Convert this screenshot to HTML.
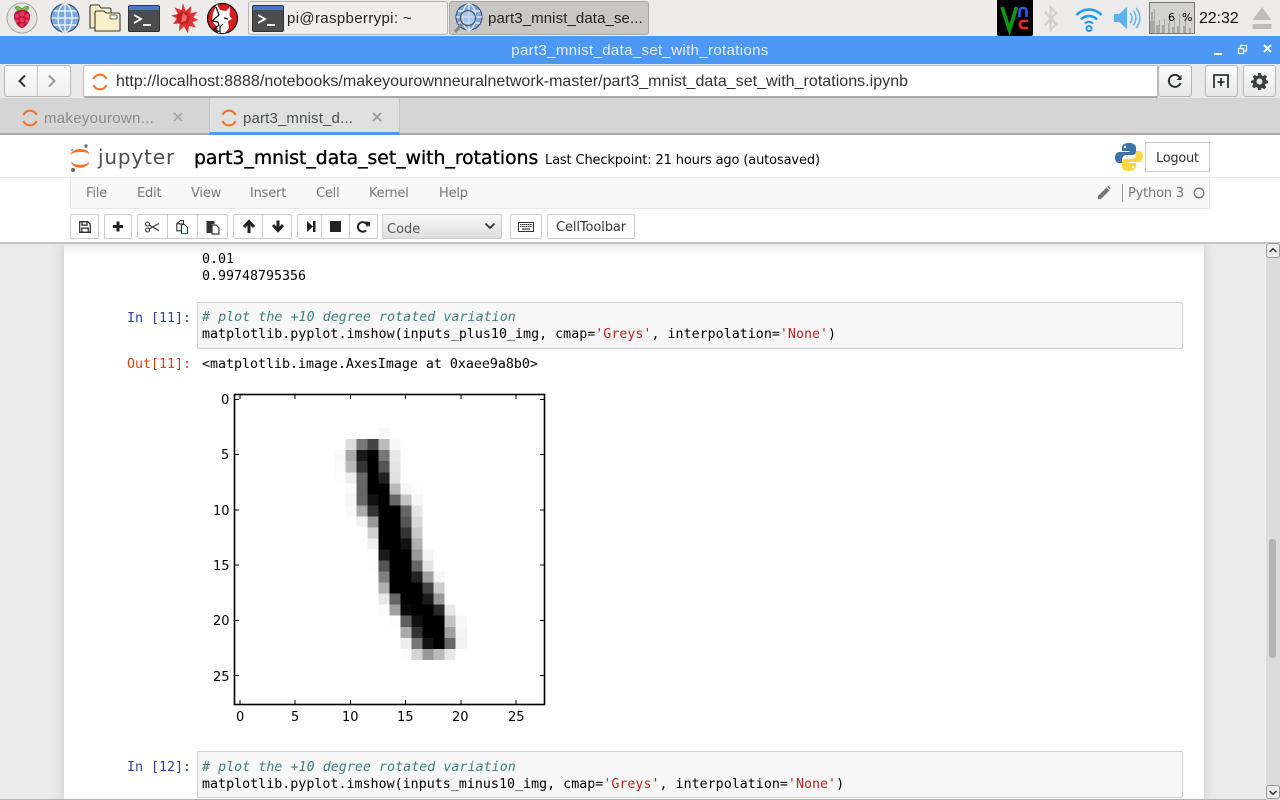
<!DOCTYPE html>
<html><head><meta charset="utf-8"><title>part3_mnist_data_set_with_rotations</title>
<style>
html,body{margin:0;padding:0;width:1280px;height:800px;overflow:hidden;background:#eee}
*{box-sizing:border-box}
.a{position:absolute}
.t{position:absolute;white-space:nowrap;line-height:20px;height:20px}
.u{font-family:"Liberation Sans",sans-serif;color:#2e3436}
.d{font-family:"DejaVu Sans",sans-serif}
.m{font-family:"DejaVu Sans Mono",monospace;font-size:13.29px;color:#000}
.c{letter-spacing:.03px}
.b{position:absolute;background:#fff;border:1px solid #ccc;border-radius:2px;height:25px;top:214px}
.g{position:absolute;top:214px;height:25px;width:1px;background:#ccc}
.mn{font-family:"DejaVu Sans",sans-serif;font-size:13px;color:#777;top:184px;letter-spacing:-.2px}
.ub{position:absolute;background:linear-gradient(#fafafa,#e9e9e9);border:1px solid #b5b5b5;border-radius:3px}
.tk{font-family:"DejaVu Sans",sans-serif;font-size:13px;color:#000}
svg{position:absolute;overflow:visible}
i{font-style:italic}
</style></head><body>

<!-- panel -->
<div class="a" style="left:0;top:0;width:1280px;height:36px;background:#edecea"></div>
<svg style="left:0;top:0" width="250" height="36" viewBox="0 0 250 36">
 <circle cx="22" cy="18" r="15" fill="#e4e4e2" stroke="#a5a5a3"/>
 <path d="M22 9c-2-3-6-3-7-2 0 2 2 4 5 4zM22 9c2-3 6-3 7-2 0 2-2 4-5 4z" fill="#6cc04a" stroke="#3a7f22" stroke-width=".5"/>
 <path d="M22 10c5 0 8 2 8 6s-1 5-2 7-4 5-6 5-5-3-6-5-2-3-2-7 3-6 8-6z" fill="#c0143c"/>
 <g fill="#e63a5e"><circle cx="22" cy="14" r="2.4"/><circle cx="17" cy="16" r="2"/><circle cx="27" cy="16" r="2"/><circle cx="22" cy="20" r="2.4"/><circle cx="17" cy="21" r="1.8"/><circle cx="27" cy="21" r="1.8"/><circle cx="22" cy="25" r="1.8"/></g>
 <circle cx="65" cy="18" r="14" fill="#7ba8e0" stroke="#3f4f66" stroke-width="1.2"/>
 <path d="M51.500 18h27M53.500 11h23M53.500 25h23M65 4v28" stroke="#e8f0fb" stroke-width="1.400" fill="none"/>
 <ellipse cx="65" cy="18" rx="7" ry="14" stroke="#e8f0fb" stroke-width="1.400" fill="none"/>
 <path d="M90 7q0-2 2-2h7l2 3h8q2 0 2 2v18h-21z" fill="#f3ecc8" stroke="#3c3a30" stroke-width="1.100"/>
 <path d="M95 13q0-2 2-2h7l2 2h12q2 0 2 2v16h-25z" fill="#f8f0ca" stroke="#3c3a30" stroke-width="1.100"/>
 <rect x="110" y="15" width="7" height="4" rx="1" fill="#fff" stroke="#3c3a30" stroke-width=".8"/>
 <rect x="128.500" y="5.500" width="31" height="26" rx="1.500" fill="#4d4d4d" stroke="#333"/>
 <rect x="129" y="6" width="30" height="4" fill="#4a78c8"/>
 <path d="M134 15l7 4-7 4" stroke="#fff" stroke-width="1.800" fill="none"/><path d="M143 25h8" stroke="#fff" stroke-width="1.800"/>
 <path d="M183 3l2.500 8 6-5-1 7 7-1-4.500 5.500 5.500 2.500-6 2 3.500 5.500-7-1.500-1 7.500-4-7-5 4.500 .5-7.500-6.500 .5 4-5.500-6-3 7-1.500-3.500-6.500 7 2.500z" fill="#e03434"/>
 <circle cx="183" cy="18" r="6.500" fill="#c42020"/><path d="M183 13l4 3-1 5-5 1z" fill="#ee6a6a"/>
 <circle cx="222.500" cy="18.500" r="15" fill="#d81e1e" stroke="#111" stroke-width="1.200"/>
 <path d="M217 4l3 6 6 1 4-4-.5 9 2.500 3-4 2 1 7-4 5h-7l-1-6-5-6 1-8z" fill="#fff"/>
 <path d="M216 7l3 8-7 6 6 1 1 3-5 4 6 3v-5l3-3M224 18l4 1" stroke="#111" stroke-width="1.200" fill="none"/>
</svg>

<div class="a" style="left:248px;top:1px;width:200px;height:34px;background:#efeeec;border:1px solid #b4b3b0;border-radius:3px"></div>
<svg style="left:252px;top:5px" width="32" height="28" viewBox="0 0 32 28">
 <rect x=".5" y=".5" width="31" height="26" rx="1.500" fill="#4d4d4d" stroke="#333"/><rect x="1" y="1" width="30" height="4" fill="#4a78c8"/>
 <path d="M6 10l7 4-7 4" stroke="#fff" stroke-width="1.800" fill="none"/><path d="M15 20h8" stroke="#fff" stroke-width="1.800"/>
</svg>
<div class="t u" style="left:287px;top:9px;font-size:15px;color:#222;letter-spacing:.35px">pi@raspberrypi: ~</div>

<div class="a" style="left:449px;top:1px;width:200px;height:34px;background:#c9c7c4;border:1px solid #a9a8a5;border-radius:3px"></div>
<svg style="left:452px;top:3px" width="32" height="32" viewBox="0 0 32 32">
 <circle cx="17" cy="14" r="13" fill="#7ba8e0" stroke="#3f4f66" stroke-width="1.100"/>
 <path d="M4 14h26M6 8h22M6 20h22M17 1v26" stroke="#e8f0fb" stroke-width="1.300" fill="none"/>
 <ellipse cx="17" cy="14" rx="6.500" ry="13" stroke="#e8f0fb" stroke-width="1.300" fill="none"/>
 <circle cx="16" cy="15" r="7.500" fill="#bcd3ee" fill-opacity=".7" stroke="#555" stroke-width="1.300"/>
 <path d="M10 21l-7 8" stroke="#8a8a8a" stroke-width="3"/>
</svg>
<div class="t u" style="left:488px;top:9px;font-size:15px;color:#222;letter-spacing:.1px">part3_mnist_data_se...</div>

<div class="a" style="left:997px;top:0;width:36px;height:36px;background:#000;border-radius:0 0 2px 2px"></div>
<svg style="left:997px;top:0" width="36" height="36" viewBox="0 0 36 36" fill="none">
 <path d="M5 7l7.500 23 7-23" stroke="#0c9a16" stroke-width="3.600"/>
 <path d="M22.500 17v-6q0-3 3.500-3t3.500 3v6" stroke="#2b5cf0" stroke-width="2.600"/>
 <path d="M31 21h-5q-3 0-3 3.500t3 3.500h5" stroke="#ea2b2b" stroke-width="2.600"/>
</svg>
<svg style="left:1043px;top:5px" width="16" height="27" viewBox="0 0 16 27" fill="none">
 <path d="M2 7l11 12-5.500 6V2L13 8 2 20" stroke="#d0d0ce" stroke-width="2.200"/>
</svg>
<svg style="left:1075px;top:5px" width="28" height="27" viewBox="0 0 28 27" fill="none" stroke="#1c9cf0">
 <path d="M1.500 10a17 17 0 0 1 25 0" stroke-width="2.500"/>
 <path d="M6 14.500a11 11 0 0 1 16 0" stroke-width="2.500"/>
 <path d="M10 18.500a5.500 5.500 0 0 1 8 0" stroke-width="2"/>
 <circle cx="14" cy="23.500" r="2.500" stroke-width="2"/>
</svg>
<svg style="left:1113px;top:6px" width="28" height="24" viewBox="0 0 28 24" fill="none">
 <path d="M1 8h5l8-7v22l-8-7H1z" fill="#5ab2f5"/>
 <path d="M17 7a7 7 0 0 1 0 10M20 4.500a11 11 0 0 1 0 15M23 2a15 15 0 0 1 0 20" stroke="#5ab2f5" stroke-width="1.500"/>
</svg>
<div class="a" style="left:1149px;top:2px;width:46px;height:32px;background:#d2d2d0;border:1px solid #777"></div>
<svg style="left:1150px;top:3px" width="44" height="30" viewBox="0 0 44 30" fill="#a8a8a6">
 <path d="M0 30V18h1v-9h2v9h1v-12h1v24h1v-8h3v-5h1v13h2v-8h2v-6h1v14h3v-10h1v-8h1v18h2v-6h2v-9h1v15h2v-7h2v-12h1v19h3v-7h2v-15h1v22h3v-5h2v5z"/>
</svg>
<div class="t d" style="left:1168px;top:8px;font-size:11px;color:#000">6</div>
<div class="t d" style="left:1182px;top:8px;font-size:11px;color:#000">%</div>
<div class="t u" style="left:1199px;top:9px;font-size:16px;color:#111;letter-spacing:-.1px">22:32</div>
<svg style="left:1252px;top:7px" width="20" height="24" viewBox="0 0 20 24" fill="#bdbdbb">
 <path d="M10 0l9.500 13H.5z"/><rect x=".5" y="17" width="19" height="5"/>
</svg>

<!-- title bar -->
<div class="a" style="left:0;top:36px;width:1280px;height:28px;background:#4d98f5"></div>
<div class="t u" style="left:0;top:41px;width:1280px;text-align:center;font-size:15px;color:#e4effd;letter-spacing:.35px">part3_mnist_data_set_with_rotations</div>
<svg style="left:1210px;top:40px" width="70" height="22" viewBox="0 0 70 22" fill="none" stroke="#f4f8ff">
 <path d="M4 14h8" stroke-width="2"/>
 <rect x="28.500" y="8.500" width="5" height="5" stroke-width="1.200"/><path d="M30.500 8V5.500h6v5.500H34" stroke-width="1.200"/>
 <path d="M54 5l7 7M61 5l-7 7" stroke-width="2"/>
</svg>

<!-- browser toolbar -->
<div class="a" style="left:0;top:64px;width:1280px;height:34px;background:#e9e9e9"></div>
<div class="ub" style="left:4px;top:65px;width:67px;height:32px;background:linear-gradient(#fbfbfb,#f0f0f0)"></div>
<div class="a" style="left:37px;top:66px;width:1px;height:30px;background:#c5c5c5"></div>
<svg style="left:15px;top:72px" width="46" height="18" viewBox="0 0 46 18" fill="none" stroke-width="2">
 <path d="M10 3.500L4.500 9l5.500 5.500" stroke="#2e3436"/><path d="M34 3.500L39.500 9 34 14.500" stroke="#9a9a9a"/>
</svg>
<div class="a" style="left:83px;top:65px;width:1075px;height:33px;background:#fff;border:1px solid #bdbdbd;border-bottom:2px solid #aaa;border-radius:3px 0 0 3px"></div>
<svg style="left:92px;top:73px" width="16" height="18" viewBox="0 0 16 18" fill="none" stroke="#f37626" stroke-width="2.200">
 <path d="M1.500 6a7 7 0 0 1 13 0"/><path d="M1.500 12a7 7 0 0 0 13 0"/>
</svg>
<div class="t u" style="left:116px;top:72px;font-size:16px;color:#333;letter-spacing:.03px">http://localhost:8888/notebooks/makeyourownneuralnetwork-master/part3_mnist_data_set_with_rotations.ipynb</div>
<div class="ub" style="left:1158px;top:65px;width:34px;height:32px"></div>
<svg style="left:1166px;top:72px" width="18" height="18" viewBox="0 0 18 18" fill="none" stroke="#2e3436" stroke-width="2">
 <path d="M14.500 11a6 6 0 1 1-1-6l1.500 2"/><path d="M15.500 3v5h-5" fill="#2e3436" stroke="none"/>
</svg>
<div class="ub" style="left:1205px;top:65px;width:33px;height:32px"></div>
<svg style="left:1212px;top:73px" width="18" height="18" viewBox="0 0 18 18" fill="none" stroke="#2e3436" stroke-width="1.800">
 <path d="M2 15V2h14v13M9 5v8M5.500 9h7"/>
</svg>
<div class="ub" style="left:1243px;top:65px;width:33px;height:32px"></div>
<svg style="left:1251px;top:73px" width="17" height="17" viewBox="0 0 17 17">
 <path d="M7 0h3l.4 2.300 1.600.7 2-1.300 2 2-1.300 2 .7 1.600L17 7.700v2.600l-2.300.4-.7 1.600 1.300 2-2 2-2-1.300-1.600.7L10 17H7l-.4-2.300-1.600-.7-2 1.300-2-2 1.300-2-.7-1.600L0 10.300V7.700l2.300-.4.7-1.600-1.300-2 2-2 2 1.300 1.600-.7z" fill="#3a3f41"/><circle cx="8.500" cy="8.500" r="3" fill="#e9e9e9"/>
</svg>

<!-- tabs -->
<div class="a" style="left:0;top:98px;width:1280px;height:37px;background:#d5d5d5;border-bottom:2px solid #a9a9a9"></div>
<div class="a" style="left:209px;top:98px;width:191px;height:37px;background:#e0e0e0;border-left:1px solid #c4c4c4;border-right:1px solid #c4c4c4;border-bottom:3px solid #4d98f5"></div>
<svg style="left:22px;top:109px" width="16" height="18" viewBox="0 0 16 18" fill="none" stroke="#f37626" stroke-width="2.200"><path d="M1.500 6a7 7 0 0 1 13 0"/><path d="M1.500 12a7 7 0 0 0 13 0"/></svg>
<div class="t u" style="left:44px;top:109px;font-size:15px;color:#8c8c8c;letter-spacing:.3px">makeyourown...</div>
<svg style="left:172px;top:111px" width="12" height="12" viewBox="0 0 12 12" stroke="#a5a5a5" stroke-width="1.800"><path d="M2 2l8 8M10 2l-8 8"/></svg>
<svg style="left:221px;top:109px" width="16" height="18" viewBox="0 0 16 18" fill="none" stroke="#f37626" stroke-width="2.200"><path d="M1.500 6a7 7 0 0 1 13 0"/><path d="M1.500 12a7 7 0 0 0 13 0"/></svg>
<div class="t u" style="left:243px;top:109px;font-size:15px;color:#4a4f51;letter-spacing:.15px">part3_mnist_d...</div>
<svg style="left:371px;top:111px" width="12" height="12" viewBox="0 0 12 12" stroke="#999" stroke-width="1.800"><path d="M2 2l8 8M10 2l-8 8"/></svg>

<!-- page bg -->
<div class="a" style="left:0;top:243px;width:1265px;height:557px;background:#ececec"></div>
<div class="a" style="left:64px;top:243px;width:1140px;height:557px;background:#fff;box-shadow:0 0 12px 1px rgba(87,87,87,.2)"></div>
<div class="a" style="left:64px;top:244px;width:1140px;height:12px;background:linear-gradient(#ececec,#fff)"></div>

<!-- jupyter header -->
<div class="a" style="left:0;top:135px;width:1280px;height:109px;background:#fff;border-bottom:2px solid #c4c4c4"></div>
<svg style="left:70px;top:143px" width="21" height="30" viewBox="0 0 21 30">
 <path d="M1.500 10.500C4 5 16 5 19 10.500 16 8 5 8 1.500 10.500z" fill="#f37626" stroke="#f37626" stroke-width=".8"/>
 <path d="M1.500 19.500C4 26 16 26 19 19.500 16 23 5 23 1.500 19.500z" fill="#f37626" stroke="#f37626" stroke-width=".8"/>
 <circle cx="16" cy="3" r="1.700" fill="#767677"/><circle cx="2" cy="7" r="1" fill="#989798"/><circle cx="3" cy="27" r="2" fill="#616262"/>
</svg>
<div class="t d" style="left:98px;top:147px;font-size:20px;color:#4e4e4e;letter-spacing:.85px">jupyter</div>
<div class="t d" style="left:194px;top:149px;font-size:18.800px;color:#000;-webkit-text-stroke:.35px #000">part3_mnist_data_set_with_rotations</div>
<div class="t d" style="left:545px;top:151px;font-size:13px;color:#000;letter-spacing:-.14px">Last Checkpoint: 21 hours ago (autosaved)</div>
<svg style="left:1115px;top:143px" width="28" height="28" viewBox="0 0 28 28">
 <path d="M14 0c-5 0-7 2-7 4.500V8h7.500v1H4.500C2 9 0 11 0 14.500S1.500 20 4 20h3v-3.500C7 14 9 12 11.500 12h6c2 0 3.500-1.500 3.500-3.500v-4C21 2 18.500 0 14 0z" fill="#3a74a8"/>
 <path d="M14 28c5 0 7-2 7-4.500V20h-7.500v-1h10C26 19 28 17 28 13.500S26.500 8 24 8h-3v3.500c0 2.500-2 4.500-4.500 4.500h-6C8.500 16 7 17.500 7 19.500v4C7 26 9.500 28 14 28z" fill="#ffd545"/>
 <circle cx="10" cy="4" r="1.200" fill="#fff"/><circle cx="18" cy="24" r="1.200" fill="#fff"/>
</svg>
<div class="a" style="left:1145px;top:142px;width:65px;height:30px;background:#fff;border:1px solid #ccc"></div>
<div class="t d" style="left:1156px;top:149px;font-size:13px;color:#333;letter-spacing:-.3px">Logout</div>
<div class="a" style="left:0;top:177px;width:1280px;height:1px;background:#e7e7e7"></div>
<div class="a" style="left:70px;top:178px;width:1140px;height:31px;background:#f8f8f8;border:1px solid #e7e7e7;border-top:0;border-radius:0 0 2px 2px"></div>
<div class="t mn" style="left:86px">File</div>
<div class="t mn" style="left:137px">Edit</div>
<div class="t mn" style="left:191px">View</div>
<div class="t mn" style="left:250px">Insert</div>
<div class="t mn" style="left:316px">Cell</div>
<div class="t mn" style="left:369px">Kernel</div>
<div class="t mn" style="left:439px">Help</div>
<svg style="left:1097px;top:186px" width="14" height="14" viewBox="0 0 14 14" fill="#777"><path d="M1 10L9.500 1.500l3 3L4 13H1zM10.500.5l1-.5 2 2-.5 1.500z"/></svg>
<div class="a" style="left:1122px;top:184px;width:1px;height:18px;background:#999"></div>
<div class="t mn" style="left:1128px">Python 3</div>
<svg style="left:1193px;top:187px" width="12" height="12" viewBox="0 0 12 12" fill="none" stroke="#777" stroke-width="1.300"><circle cx="6" cy="6" r="4.800"/></svg>

<!-- jupyter toolbar -->
<div class="b" style="left:70px;width:29px"></div>
<div class="b" style="left:104px;width:28px"></div>
<div class="b" style="left:137px;width:91px"></div><div class="g" style="left:167px"></div><div class="g" style="left:197px"></div>
<div class="b" style="left:233px;width:59px"></div><div class="g" style="left:262px"></div>
<div class="b" style="left:297px;width:81px"></div><div class="g" style="left:321px"></div><div class="g" style="left:349px"></div>
<div class="b" style="left:382px;width:120px;background:linear-gradient(#f8f8f8,#dedede);border-radius:2px"></div>
<div class="t d" style="left:387px;top:220px;font-size:13px;color:#555">Code</div>
<svg style="left:484px;top:222px" width="12" height="8" viewBox="0 0 12 8" fill="none" stroke="#333" stroke-width="1.800"><path d="M1.500 1.500L6 6l4.500-4.500"/></svg>
<div class="b" style="left:510px;width:32px"></div>
<div class="b" style="left:547px;width:88px"></div>
<div class="t d" style="left:556px;top:218px;font-size:13px;color:#333;letter-spacing:-.1px">CellToolbar</div>
<svg style="left:70px;top:214px" width="570" height="25" viewBox="0 0 570 25">
 <g transform="translate(9,7)" fill="none" stroke="#333" stroke-width="1.300"><path d="M.7 .7h8l2.600 2.600v8H.7z"/><path d="M3 .7v3.500h5V.7M2.800 11V7.200h6.400V11"/></g>
 <path d="M48 7.500v10M43 12.500h10" stroke="#222" stroke-width="3" fill="none"/>
 <g transform="translate(75,7)" fill="none" stroke="#333" stroke-width="1.100"><circle cx="2.500" cy="3" r="2"/><circle cx="2.500" cy="9" r="2"/><path d="M4 4l10 5.500M4 8l10-5.500"/></g>
 <g transform="translate(106,6)" stroke="#333" stroke-width="1.100"><path d="M4.500 .6h3v3.400H1V3.500L4.500 .6z" fill="#fff"/><path d="M.8 3.800h4.500v7H.8z" fill="#fff"/><path d="M5.500 4.500h3l3 3v6H5.500z" fill="#fff"/><path d="M5.500 13.500h6" stroke="#2b5cb8"/></g>
 <g transform="translate(136,6)"><path d="M.5 1h8v3h-3v9h-5z" fill="#333"/><path d="M6 5h4l3 3v6H6z" fill="#fff" stroke="#333" stroke-width="1.200"/></g>
 <path d="M179 19v-10M174 13l5-5.500 5 5.500" stroke="#222" stroke-width="3" fill="none"/>
 <path d="M208 6.500v10M203 11l5 5.500 5-5.500" stroke="#222" stroke-width="3" fill="none"/>
 <path d="M237 7l6 5.500-6 5.500z M243 7h2.500v11H243z" fill="#222"/>
 <rect x="260" y="7" width="11" height="11" fill="#222"/>
 <path d="M298 12.500a4.800 4.800 0 1 0-1.400 3.800" stroke="#222" stroke-width="2" fill="none" transform="translate(-.5,0)"/><path d="M295 7.500l5 .500v5z" fill="#222"/>
 <g transform="translate(448,8)"><rect x=".5" y=".5" width="15" height="9" fill="#fff" stroke="#333"/><path d="M2 2.500h12M2 4.500h12" stroke="#333" stroke-dasharray="1.500 .5"/><path d="M4 7h8" stroke="#333" stroke-width="1.200"/></g>
</svg>

<!-- notebook -->
<div class="t m" style="left:202px;top:250px">0.01</div>
<div class="t m" style="left:202px;top:267px">0.99748795356</div>

<div class="t m" style="left:127px;top:309px;color:#303f9f">In [11]:</div>
<div class="a" style="left:197px;top:302px;width:986px;height:47px;background:#f7f7f7;border:1px solid #cfcfcf;border-radius:2px"></div>
<div class="t m" style="left:202px;top:308px;color:#408080;letter-spacing:.05px"><i># plot the +10 degree rotated variation</i></div>
<div class="t m c" style="left:202px;top:325px">matplotlib.pyplot.imshow(inputs_plus10_img, cmap=<span style="color:#ba2121">'Greys'</span>, interpolation=<span style="color:#ba2121">'None'</span>)</div>
<div class="t m" style="left:127px;top:355px;color:#d84315">Out[11]:</div>
<div class="t m" style="left:202px;top:355px">&lt;matplotlib.image.AxesImage at 0xaee9a8b0&gt;</div>

<!-- digit -->
<svg style="left:235px;top:395px" width="309" height="309" viewBox="0 0 28 28" shape-rendering="crispEdges">
<rect x="13" y="3" width="1" height="1" fill="#fbfbfb"/>
<rect x="10" y="4" width="1" height="1" fill="#ddd"/><rect x="11" y="4" width="1" height="1" fill="#777"/><rect x="12" y="4" width="1" height="1" fill="#444"/><rect x="13" y="4" width="1" height="1" fill="#bbb"/><rect x="14" y="4" width="1" height="1" fill="#f8f8f8"/>
<rect x="9" y="5" width="1" height="1" fill="#fafafa"/><rect x="10" y="5" width="1" height="1" fill="#aaa"/><rect x="11" y="5" width="1" height="1" fill="#1a1a1a"/><rect x="12" y="5" width="1" height="1" fill="#000"/><rect x="13" y="5" width="1" height="1" fill="#777"/><rect x="14" y="5" width="1" height="1" fill="#e8e8e8"/>
<rect x="9" y="6" width="1" height="1" fill="#fbfbfb"/><rect x="10" y="6" width="1" height="1" fill="#bbb"/><rect x="11" y="6" width="1" height="1" fill="#333"/><rect x="12" y="6" width="1" height="1" fill="#000"/><rect x="13" y="6" width="1" height="1" fill="#555"/><rect x="14" y="6" width="1" height="1" fill="#e4e4e4"/>
<rect x="9" y="7" width="1" height="1" fill="#fcfcfc"/><rect x="10" y="7" width="1" height="1" fill="#eee"/><rect x="11" y="7" width="1" height="1" fill="#666"/><rect x="12" y="7" width="1" height="1" fill="#000"/><rect x="13" y="7" width="1" height="1" fill="#222"/><rect x="14" y="7" width="1" height="1" fill="#e0e0e0"/>
<rect x="10" y="8" width="1" height="1" fill="#fafafa"/><rect x="11" y="8" width="1" height="1" fill="#666"/><rect x="12" y="8" width="2" height="1" fill="#000"/><rect x="14" y="8" width="1" height="1" fill="#bbb"/><rect x="15" y="8" width="1" height="1" fill="#f6f6f6"/><rect x="16" y="8" width="1" height="1" fill="#fcfcfc"/>
<rect x="10" y="9" width="1" height="1" fill="#f6f6f6"/><rect x="11" y="9" width="1" height="1" fill="#666"/><rect x="12" y="9" width="1" height="1" fill="#111"/><rect x="13" y="9" width="1" height="1" fill="#000"/><rect x="14" y="9" width="1" height="1" fill="#666"/><rect x="15" y="9" width="1" height="1" fill="#c4c4c4"/><rect x="16" y="9" width="1" height="1" fill="#f6f6f6"/>
<rect x="10" y="10" width="1" height="1" fill="#fafafa"/><rect x="11" y="10" width="1" height="1" fill="#aaa"/><rect x="12" y="10" width="1" height="1" fill="#333"/><rect x="13" y="10" width="2" height="1" fill="#000"/><rect x="15" y="10" width="1" height="1" fill="#666"/><rect x="16" y="10" width="1" height="1" fill="#e4e4e4"/>
<rect x="11" y="11" width="1" height="1" fill="#f2f2f2"/><rect x="12" y="11" width="1" height="1" fill="#999"/><rect x="13" y="11" width="2" height="1" fill="#000"/><rect x="15" y="11" width="1" height="1" fill="#555"/><rect x="16" y="11" width="1" height="1" fill="#d8d8d8"/>
<rect x="12" y="12" width="1" height="1" fill="#d0d0d0"/><rect x="13" y="12" width="2" height="1" fill="#000"/><rect x="15" y="12" width="1" height="1" fill="#333"/><rect x="16" y="12" width="1" height="1" fill="#c8c8c8"/>
<rect x="12" y="13" width="1" height="1" fill="#f0f0f0"/><rect x="13" y="13" width="2" height="1" fill="#000"/><rect x="15" y="13" width="1" height="1" fill="#111"/><rect x="16" y="13" width="1" height="1" fill="#b0b0b0"/>
<rect x="12" y="14" width="1" height="1" fill="#fcfcfc"/><rect x="13" y="14" width="1" height="1" fill="#1a1a1a"/><rect x="14" y="14" width="2" height="1" fill="#000"/><rect x="16" y="14" width="1" height="1" fill="#999"/><rect x="17" y="14" width="1" height="1" fill="#f4f4f4"/>
<rect x="12" y="15" width="1" height="1" fill="#fcfcfc"/><rect x="13" y="15" width="1" height="1" fill="#555"/><rect x="14" y="15" width="2" height="1" fill="#000"/><rect x="16" y="15" width="1" height="1" fill="#666"/><rect x="17" y="15" width="1" height="1" fill="#e4e4e4"/>
<rect x="13" y="16" width="1" height="1" fill="#808080"/><rect x="14" y="16" width="2" height="1" fill="#000"/><rect x="16" y="16" width="1" height="1" fill="#222"/><rect x="17" y="16" width="1" height="1" fill="#a0a0a0"/><rect x="18" y="16" width="1" height="1" fill="#f6f6f6"/>
<rect x="13" y="17" width="1" height="1" fill="#b0b0b0"/><rect x="14" y="17" width="3" height="1" fill="#000"/><rect x="17" y="17" width="1" height="1" fill="#444"/><rect x="18" y="17" width="1" height="1" fill="#ccc"/>
<rect x="13" y="18" width="1" height="1" fill="#e8e8e8"/><rect x="14" y="18" width="1" height="1" fill="#666"/><rect x="15" y="18" width="2" height="1" fill="#000"/><rect x="17" y="18" width="1" height="1" fill="#1a1a1a"/><rect x="18" y="18" width="1" height="1" fill="#999"/>
<rect x="13" y="19" width="1" height="1" fill="#fcfcfc"/><rect x="14" y="19" width="1" height="1" fill="#a0a0a0"/><rect x="15" y="19" width="1" height="1" fill="#0a0a0a"/><rect x="16" y="19" width="2" height="1" fill="#000"/><rect x="18" y="19" width="1" height="1" fill="#2a2a2a"/><rect x="19" y="19" width="1" height="1" fill="#e8e8e8"/>
<rect x="14" y="20" width="1" height="1" fill="#fcfcfc"/><rect x="15" y="20" width="1" height="1" fill="#606060"/><rect x="16" y="20" width="1" height="1" fill="#111"/><rect x="17" y="20" width="2" height="1" fill="#000"/><rect x="19" y="20" width="1" height="1" fill="#c4c4c4"/><rect x="20" y="20" width="1" height="1" fill="#f8f8f8"/>
<rect x="15" y="21" width="1" height="1" fill="#aaa"/><rect x="16" y="21" width="1" height="1" fill="#333"/><rect x="17" y="21" width="2" height="1" fill="#000"/><rect x="19" y="21" width="1" height="1" fill="#a0a0a0"/><rect x="20" y="21" width="1" height="1" fill="#f4f4f4"/>
<rect x="15" y="22" width="1" height="1" fill="#eee"/><rect x="16" y="22" width="1" height="1" fill="#777"/><rect x="17" y="22" width="1" height="1" fill="#111"/><rect x="18" y="22" width="1" height="1" fill="#000"/><rect x="19" y="22" width="1" height="1" fill="#666"/><rect x="20" y="22" width="1" height="1" fill="#f2f2f2"/>
<rect x="15" y="23" width="1" height="1" fill="#fcfcfc"/><rect x="16" y="23" width="1" height="1" fill="#d4d4d4"/><rect x="17" y="23" width="1" height="1" fill="#999"/><rect x="18" y="23" width="1" height="1" fill="#bbb"/><rect x="19" y="23" width="1" height="1" fill="#e8e8e8"/>
</svg>
<!-- axes -->
<svg style="left:230px;top:390px" width="320" height="320" viewBox="0 0 320 320" fill="none" stroke="#000">
 <rect x="4.500" y="4.500" width="310" height="310" stroke-width="1.600"/>
 <path d="M10 5v4M65 5v4M120.500 5v4M175.500 5v4M231 5v4M286 5v4M10 314v-4M65 314v-4M120.500 314v-4M175.500 314v-4M231 314v-4M286 314v-4M5 9.500h4M5 64.500h4M5 120h4M5 175h4M5 230.500h4M5 285.500h4M314 9.500h-4M314 64.500h-4M314 120h-4M314 175h-4M314 230.500h-4M314 285.500h-4" stroke-width="1"/>
</svg>
<div class="t tk" style="left:221px;top:391px">0</div>
<div class="t tk" style="left:221px;top:446px">5</div>
<div class="t tk" style="left:213px;top:502px">10</div>
<div class="t tk" style="left:213px;top:557px">15</div>
<div class="t tk" style="left:213px;top:612px">20</div>
<div class="t tk" style="left:213px;top:668px">25</div>
<div class="t tk" style="left:236px;top:708px">0</div>
<div class="t tk" style="left:291px;top:708px">5</div>
<div class="t tk" style="left:342px;top:708px">10</div>
<div class="t tk" style="left:397px;top:708px">15</div>
<div class="t tk" style="left:452px;top:708px">20</div>
<div class="t tk" style="left:508px;top:708px">25</div>

<div class="t m" style="left:127px;top:758px;color:#303f9f">In [12]:</div>
<div class="a" style="left:197px;top:751px;width:986px;height:47px;background:#f7f7f7;border:1px solid #cfcfcf;border-radius:2px"></div>
<div class="t m" style="left:202px;top:758px;color:#408080;letter-spacing:.05px"><i># plot the +10 degree rotated variation</i></div>
<div class="t m c" style="left:202px;top:775px">matplotlib.pyplot.imshow(inputs_minus10_img, cmap=<span style="color:#ba2121">'Greys'</span>, interpolation=<span style="color:#ba2121">'None'</span>)</div>

<!-- scrollbar -->
<div class="a" style="left:1266px;top:243px;width:14px;height:557px;background:#dcdcdc"></div>
<div class="a" style="left:1266px;top:243px;width:14px;height:15px;background:#ececec;border:1px solid #999;border-radius:3px"></div>
<svg style="left:1268px;top:247px" width="10" height="7" viewBox="0 0 10 7" fill="none" stroke="#333" stroke-width="1.500"><path d="M1.500 5L5 1.800 8.500 5"/></svg>
<div class="a" style="left:1269px;top:539px;width:7px;height:119px;background:#b4b4b4;border-radius:3px"></div>
<div class="a" style="left:1266px;top:785px;width:14px;height:14px;background:#ececec;border:1px solid #999;border-radius:3px"></div>
<svg style="left:1268px;top:789px" width="10" height="7" viewBox="0 0 10 7" fill="none" stroke="#333" stroke-width="1.500"><path d="M1.500 2L5 5.200 8.500 2"/></svg>
<div class="a" style="left:0;top:799px;width:1266px;height:1px;background:#b4b4b4"></div>
</body></html>
